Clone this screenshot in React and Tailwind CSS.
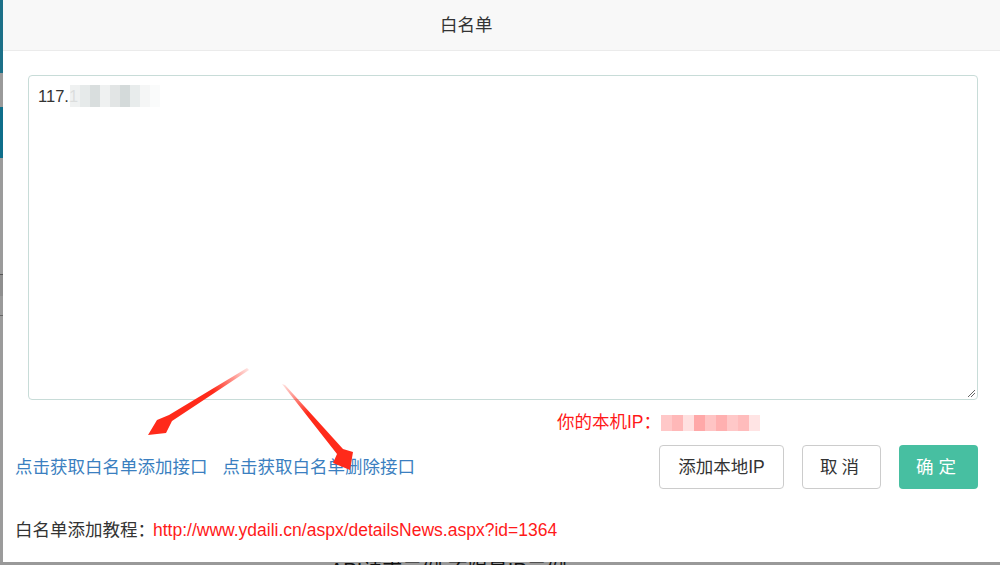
import React from 'react';

const font = { fontFamily: '"Liberation Sans", "Noto Sans CJK SC", sans-serif' };

const blurIp = ['#eef0f0', '#e4e8e8', '#d5dbdb', '#eef0f0', '#dfe3e3', '#d0d6d6', '#e6eaea', '#f4f6f6', '#fafbfb'];
const blurRed = ['#ffc8c8', '#ffb8b8', '#ffe0e0', '#ffa8a8', '#ffc4c4', '#ffb0b0', '#ffc8c8', '#ffbcbc', '#ffe4e4'];

const Arrows = () => (
  <svg className="absolute left-0 top-0 pointer-events-none" width="1000" height="565">
    <defs>
      <linearGradient id="g1" x1="247" y1="369" x2="150" y2="434" gradientUnits="userSpaceOnUse">
        <stop offset="0" stopColor="#ff2a1a" stopOpacity="0.15" />
        <stop offset="0.35" stopColor="#ff2a1a" />
        <stop offset="1" stopColor="#ff2a1a" />
      </linearGradient>
      <linearGradient id="g2" x1="283" y1="385" x2="350" y2="470" gradientUnits="userSpaceOnUse">
        <stop offset="0" stopColor="#ff2a1a" stopOpacity="0.15" />
        <stop offset="0.35" stopColor="#ff2a1a" />
        <stop offset="1" stopColor="#ff2a1a" />
      </linearGradient>
    </defs>
    <polygon points="247,368 249,370 172,421 166,433 148,435 157,420 169,415" fill="url(#g1)" />
    <polygon points="282,384 285,385 343,449 353,452 350,470 333,463 337,454" fill="url(#g2)" />
  </svg>
);

export default function App() {
  return (
    <div className="relative w-[1000px] h-[565px] overflow-hidden bg-[#999]" style={font}>
      <div className="flex h-[562px]">
        <div className="w-[3px] flex flex-col shrink-0">
          <div className="h-[73px] bg-[#1c7088]" />
          <div className="h-[34px] bg-[#9a9a9a]" />
          <div className="h-[51px] bg-[#0f6e8a]" />
          <div className="h-[116px] bg-[#9b9b9b]" />
          <div className="h-[22px] bg-[#8f8f8f] border-t border-[#555]" />
          <div className="h-[20px] bg-[#9a9a9a] border-b border-[#666]" />
          <div className="flex-1 bg-[#9b9b9b]" />
        </div>
        <div className="flex-1 bg-white flex flex-col">
          <div className="h-[51px] shrink-0 bg-[#f8f8f8] border-b border-[#ebebeb] flex items-center pl-[437px]">
            <span className="text-[17.5px] text-[#333]">白名单</span>
          </div>
          <div className="pl-[25px] pt-[24px]">
            <div className="relative w-[950px] h-[325px] border border-[#c8dcd8] rounded-[4px] px-[9px] pt-[8px]">
              <div className="flex items-center text-[16.5px] text-[#333]">
                <span>117.1</span>
                <div className="flex -ml-[8px] opacity-90">
                  {blurIp.map((c, i) => (
                    <div key={i} className="w-[10px] h-[22px]" style={{ background: c }} />
                  ))}
                </div>
              </div>
              <svg className="absolute right-[1px] bottom-[1px]" width="10" height="10">
                <line x1="2" y1="9" x2="9" y2="2" stroke="#666" strokeWidth="1" />
                <line x1="5" y1="9" x2="9" y2="5" stroke="#666" strokeWidth="1" />
              </svg>
            </div>
          </div>
          <div className="h-[45px] flex items-center pl-[554px]">
            <span className="text-[17.5px] text-[#ff1a1a]">你的本机IP：</span>
            <div className="flex">
              {blurRed.map((c, i) => (
                <div key={i} className="w-[11px] h-[16px]" style={{ background: c }} />
              ))}
            </div>
          </div>
          <div className="flex items-center pl-[12px] pr-[22px]">
            <a className="text-[17.5px] text-[#3b7fc0]">点击获取白名单添加接口</a>
            <a className="ml-[15px] text-[17.5px] text-[#3b7fc0]">点击获取白名单删除接口</a>
            <div className="ml-auto flex gap-[18px]">
              <button className="h-[44px] w-[125px] border border-[#ccc] rounded-[4px] text-[17.5px] text-[#333] bg-white">添加本地IP</button>
              <button className="h-[44px] w-[79px] border border-[#ccc] rounded-[4px] text-[17.5px] text-[#333] bg-white tracking-[4px]">取消</button>
              <button className="h-[44px] w-[79px] rounded-[4px] text-[17.5px] text-white bg-[#47bfa1] tracking-[5px]">确定</button>
            </div>
          </div>
          <div className="pl-[12px] pt-[28px] text-[17.5px]">
            <span className="text-[#333]">白名单添加教程：</span>
            <span className="text-[#ff1a1a] -ml-[2px]">http://www.ydaili.cn/aspx/detailsNews.aspx?id=1364</span>
          </div>
        </div>
      </div>
      <div className="h-[3px] overflow-hidden bg-[#999] pl-[330px]">
        <span className="text-[20px] leading-[20px] text-[#111] block -mt-[2px]">API请求示例 不限量IP示例</span>
      </div>
      <Arrows />
    </div>
  );
}
